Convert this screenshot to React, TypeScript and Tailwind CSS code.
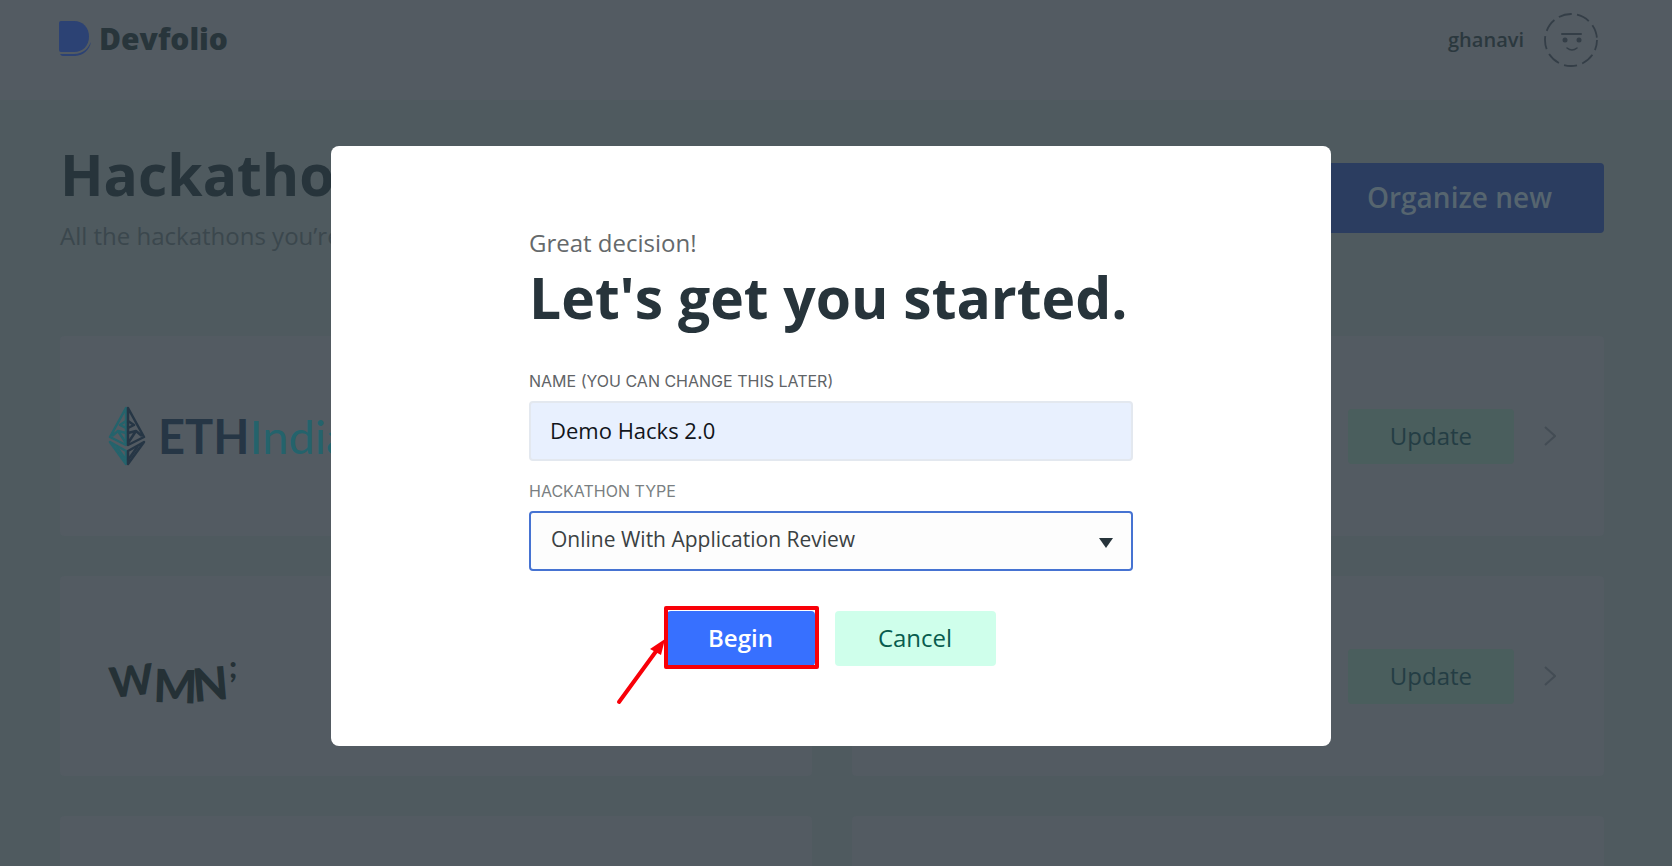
import { useState } from "react";
import type { ReactNode } from "react";

function DevfolioMark() {
  return (
    <svg width="32" height="36" viewBox="0 0 32 36" aria-hidden="true">
      <path
        d="M2 0H15C24 0 30 6.5 30 15.500C30 24.500 24 31 15 31H2Q0 31 0 29V2Q0 0 2 0Z"
        fill="#2c4274"
      />
      <path d="M1 33Q2 35 4 35H16C24.500 34.500 30.500 29 32 21C28 29 24 32.500 15 33Z" fill="#2c4274" />
    </svg>
  );
}

function Avatar() {
  return (
    <svg width="54" height="54" viewBox="0 0 54 54" fill="none" stroke="#343e47" aria-hidden="true">
      <circle cx="27" cy="27" r="26" strokeWidth="1.800" strokeDasharray="13.300 5.400" strokeDashoffset="3" />
      <path d="M18 21H37" strokeWidth="2" strokeLinecap="round" />
      <circle cx="21" cy="27" r="2.500" fill="#343e47" stroke="none" />
      <circle cx="35" cy="27" r="2.500" fill="#343e47" stroke="none" />
      <path d="M23 35Q28 39 33 35" strokeWidth="1.500" strokeLinecap="round" />
    </svg>
  );
}

function EthIndiaLogo() {
  return (
    <div className="flex items-center gap-3">
      <svg width="38" height="60" viewBox="0 0 38 60" fill="none" strokeWidth="2.500" strokeLinejoin="round" aria-hidden="true">
        <g stroke="#24636c">
          <path d="M18 2L2 31L18 39Z" />
          <path d="M18 15L12 19L18 22" />
          <path d="M4 30L10 25L18 27M10 25L18 37" />
          <path d="M2 36L18 45V58Z" />
          <path d="M8 40L18 54" />
        </g>
        <g stroke="#263645">
          <path d="M20 2L36 31L20 39Z" />
          <path d="M20 15L26 19L20 22" />
          <path d="M34 30L28 25L20 27M28 25L20 37" />
          <path d="M36 36L20 45V58Z" />
          <path d="M30 40L20 54" />
        </g>
      </svg>
      <span className="font-[Lato,sans-serif] text-[47px] leading-[60px] text-[#24636c]">
        <b className="font-bold text-[#263645]">ETH</b>India
      </span>
    </div>
  );
}

function WmnLogo() {
  return (
    <svg
      width="140"
      height="72"
      viewBox="0 0 140 72"
      className="mt-3 overflow-visible font-[Lato,sans-serif] font-black"
      fill="#253136"
      role="img"
      aria-label="WMN;"
    >
      <text x="3" y="52" fontSize="42" transform="rotate(-6 3 52)">W</text>
      <text x="45" y="56" fontSize="46" transform="rotate(2 45 56)">M</text>
      <text x="86" y="56" fontSize="46" transform="rotate(-5 86 56)">N</text>
      <text x="121" y="32" fontSize="30">;</text>
    </svg>
  );
}

function HackathonCard({ logo, children }: { logo?: ReactNode; children?: ReactNode }) {
  return (
    <article className="flex h-[200px] items-center justify-between rounded bg-[#535b62] px-12">
      <div>{logo}</div>
      {children}
    </article>
  );
}

function CardActions() {
  return (
    <div className="flex items-center gap-[30px]">
      <button type="button" className="h-[55px] rounded bg-[#4a5e5d] px-[42px] text-2xl text-[#243d44]">
        Update
      </button>
      <svg width="12" height="20" viewBox="0 0 12 20" fill="none" stroke="#434c54" strokeWidth="2" aria-hidden="true">
        <path d="M1 1L11 10L1 19" />
      </svg>
    </div>
  );
}

function Dashboard() {
  return (
    <div className="min-h-screen bg-[#4f5a5f]">
      <header className="flex items-center justify-between bg-[#535b62] pt-[13px] pr-[74px] pb-[33px] pl-[59px]">
        <a href="#" className="flex items-center gap-2 pb-0.5 text-[30px] leading-9 font-extrabold text-[#28353b]">
          <DevfolioMark />
          Devfolio
        </a>
        <div className="flex items-center gap-5 text-xl font-semibold text-[#2b383e]">
          ghanavi
          <Avatar />
        </div>
      </header>
      <main className="pt-9 pr-[68px] pl-[60px]">
        <div className="flex h-[200px] items-start justify-between">
          <div>
            <h1 className="text-[57px] leading-[76px] font-bold text-[#27343b]">Hackathons</h1>
            <p className="mt-1 text-2xl leading-10 text-[#3b474d]">All the hackathons you’re organizing</p>
          </div>
          <button type="button" className="mt-[27px] h-[70px] rounded bg-[#2b3d60] pr-[52px] pb-0.5 pl-16 text-[28px] font-semibold text-[#56656f]">
            Organize new
          </button>
        </div>
        <div className="grid grid-cols-2 gap-10">
          <HackathonCard logo={<EthIndiaLogo />} />
          <HackathonCard>
            <CardActions />
          </HackathonCard>
          <HackathonCard logo={<WmnLogo />} />
          <HackathonCard>
            <CardActions />
          </HackathonCard>
          <HackathonCard />
          <HackathonCard />
        </div>
      </main>
    </div>
  );
}

function StartDialog() {
  const [name, setName] = useState("Demo Hacks 2.0");
  return (
    <div className="fixed inset-0 flex items-center justify-center pt-[26px] pr-[10px]">
      <form
        role="dialog"
        aria-labelledby="dialog-title"
        onSubmit={(e) => e.preventDefault()}
        className="w-full max-w-[1000px] rounded-lg bg-white px-[198px] pt-[77px] pb-20"
      >
        <p className="text-2xl leading-10 text-[#65696b]">Great decision!</p>
        <h2 id="dialog-title" className="text-[57px] leading-[68px] font-bold whitespace-nowrap text-[#27343b]">
          Let's get you started.
        </h2>
        <label htmlFor="hack-name" className="mt-[38px] block text-base leading-6 text-[#5f6467] font-[Inter,sans-serif] uppercase">
          Name (you can change this later)
        </label>
        <input
          id="hack-name"
          value={name}
          onChange={(e) => setName(e.target.value)}
          className="mt-2 block h-[60px] w-full rounded border-2 border-[#e3e8ef] bg-[#e8f0fe] px-[19px] pb-0.5 text-[22px] text-[#12151a] outline-none"
        />
        <label htmlFor="hack-type" className="mt-[18px] block text-base leading-6 text-[#7a7f82] font-[Inter,sans-serif] uppercase">
          Hackathon type
        </label>
        <div className="relative mt-2">
          <select
            id="hack-type"
            className="block h-[60px] w-full appearance-none rounded border-2 border-[#4673d2] bg-[#fdfdfd] px-5 pb-0.5 text-[21px] text-[#3b4143] outline-none"
          >
            <option>Online With Application Review</option>
          </select>
          <svg width="14" height="10" viewBox="0 0 14 10" className="pointer-events-none absolute top-[27px] right-5" aria-hidden="true">
            <path d="M0 0H14L7 10Z" fill="#27343b" />
          </svg>
        </div>
        <div className="mt-10 flex justify-center gap-5">
          <div className="relative">
            <button type="submit" className="h-[55px] w-[148px] rounded bg-[#3770ff] pb-0.5 text-2xl font-semibold text-white">
              Begin
            </button>
            <svg width="206" height="104" viewBox="0 0 206 104" className="pointer-events-none absolute -top-[6px] -left-[52px]" fill="none" stroke="#f80008" aria-hidden="true">
              <rect x="51" y="3" width="151" height="59" strokeWidth="4" strokeLinejoin="round" />
              <path d="M4 97L42 45" strokeWidth="4" strokeLinecap="round" />
              <path d="M50 34L35 44L46 50Z" fill="#f80008" stroke="none" />
            </svg>
          </div>
          <button type="button" className="h-[55px] w-[161px] rounded bg-[#cfffeb] pb-0.5 text-2xl font-medium text-[#085c4e]">
            Cancel
          </button>
        </div>
      </form>
    </div>
  );
}

export default function App() {
  return (
    <div className="h-screen overflow-hidden font-['Open_Sans','Noto_Sans',sans-serif]">
      <Dashboard />
      <StartDialog />
    </div>
  );
}
